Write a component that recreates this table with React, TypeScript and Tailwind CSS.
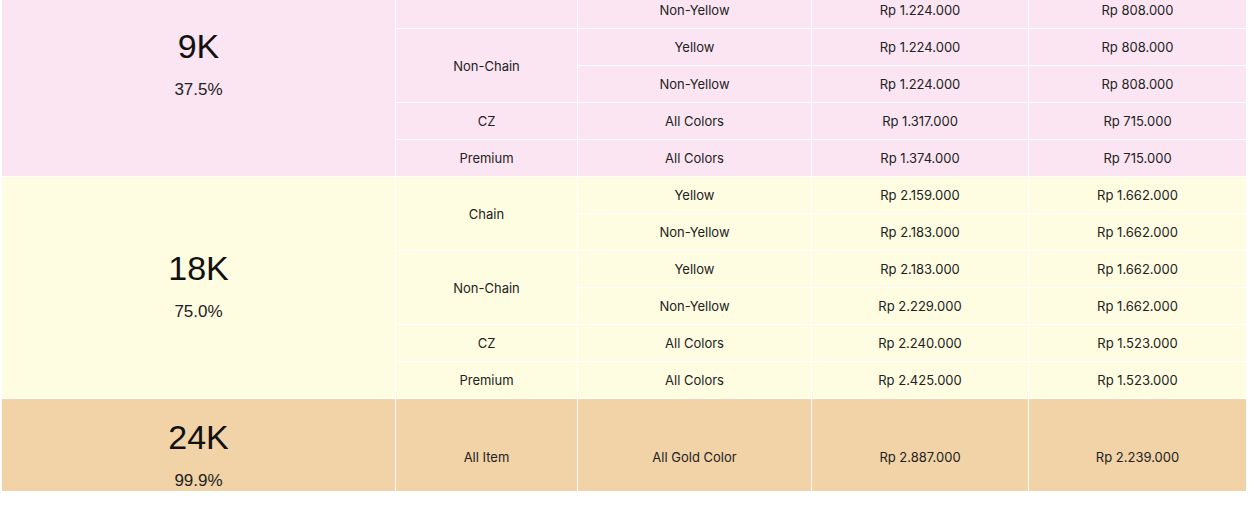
import React from "react";

type Row = { color: string; p1: string; p2: string };
type Group = { type: string; rows: Row[] };
type Karat = { k: string; pct: string; bg: string; groups: Group[] };

const data: Karat[] = [
  {
    k: "9K",
    pct: "37.5%",
    bg: "bg-[#fce5f2]",
    groups: [
      {
        type: "Chain",
        rows: [
          { color: "Yellow", p1: "Rp 1.224.000", p2: "Rp 808.000" },
          { color: "Non-Yellow", p1: "Rp 1.224.000", p2: "Rp 808.000" },
        ],
      },
      {
        type: "Non-Chain",
        rows: [
          { color: "Yellow", p1: "Rp 1.224.000", p2: "Rp 808.000" },
          { color: "Non-Yellow", p1: "Rp 1.224.000", p2: "Rp 808.000" },
        ],
      },
      { type: "CZ", rows: [{ color: "All Colors", p1: "Rp 1.317.000", p2: "Rp 715.000" }] },
      { type: "Premium", rows: [{ color: "All Colors", p1: "Rp 1.374.000", p2: "Rp 715.000" }] },
    ],
  },
  {
    k: "18K",
    pct: "75.0%",
    bg: "bg-[#fefce1]",
    groups: [
      {
        type: "Chain",
        rows: [
          { color: "Yellow", p1: "Rp 2.159.000", p2: "Rp 1.662.000" },
          { color: "Non-Yellow", p1: "Rp 2.183.000", p2: "Rp 1.662.000" },
        ],
      },
      {
        type: "Non-Chain",
        rows: [
          { color: "Yellow", p1: "Rp 2.183.000", p2: "Rp 1.662.000" },
          { color: "Non-Yellow", p1: "Rp 2.229.000", p2: "Rp 1.662.000" },
        ],
      },
      { type: "CZ", rows: [{ color: "All Colors", p1: "Rp 2.240.000", p2: "Rp 1.523.000" }] },
      { type: "Premium", rows: [{ color: "All Colors", p1: "Rp 2.425.000", p2: "Rp 1.523.000" }] },
    ],
  },
];

const rowStart = ["row-start-1", "row-start-2", "row-start-3", "row-start-4", "row-start-5", "row-start-6", "row-start-7", "row-start-8", "row-start-9", "row-start-10", "row-start-11", "row-start-12", "row-start-13"];
const rowSpan: Record<number, string> = { 1: "row-span-1", 2: "row-span-2", 6: "row-span-6" };

const cell = "flex items-center justify-center pt-[2px] text-[13px] text-[#222222]";

function KaratCell({ k, pct }: { k: string; pct: string }) {
  return (
    <div className="flex flex-col items-center pb-[4px]">
      <div className="text-[34px] leading-[40px] text-[#111111]" style={{ fontFamily: "'Liberation Sans', Arial, sans-serif" }}>
        {k}
      </div>
      <div className="mt-[12px] text-[17px] leading-[24px] text-[#222222]" style={{ fontFamily: "'Liberation Sans', Arial, sans-serif" }}>
        {pct}
      </div>
    </div>
  );
}

export default function App() {
  const cells: React.ReactNode[] = [];
  let r = 0;
  data.forEach((kt, ki) => {
    const start = r;
    cells.push(
      <div key={`k${ki}`} className={`${kt.bg} col-start-1 ${rowStart[start]} row-span-6 flex items-center justify-center`}>
        <KaratCell k={kt.k} pct={kt.pct} />
      </div>
    );
    kt.groups.forEach((g, gi) => {
      cells.push(
        <div key={`g${ki}-${gi}`} className={`${kt.bg} ${cell} col-start-2 ${rowStart[r]} ${rowSpan[g.rows.length]}`}>
          {g.type}
        </div>
      );
      g.rows.forEach((row, ri) => {
        cells.push(
          <div key={`c${ki}-${gi}-${ri}`} className={`${kt.bg} ${cell} col-start-3 ${rowStart[r]}`}>
            {row.color}
          </div>
        );
        cells.push(
          <div key={`p${ki}-${gi}-${ri}`} className={`${kt.bg} ${cell} col-start-4 ${rowStart[r]}`}>
            {row.p1}
          </div>
        );
        cells.push(
          <div key={`q${ki}-${gi}-${ri}`} className={`${kt.bg} ${cell} col-start-5 ${rowStart[r]}`}>
            {row.p2}
          </div>
        );
        r++;
      });
    });
  });

  const tan = "bg-[#f1d3a7]";
  cells.push(
    <div key="k24" className={`${tan} col-start-1 row-start-13 flex items-center justify-center`}>
      <KaratCell k="24K" pct="99.9%" />
    </div>,
    <div key="g24" className={`${tan} ${cell} col-start-2 row-start-13`}>All Item</div>,
    <div key="c24" className={`${tan} ${cell} col-start-3 row-start-13`}>All Gold Color</div>,
    <div key="p24" className={`${tan} ${cell} col-start-4 row-start-13`}>Rp 2.887.000</div>,
    <div key="q24" className={`${tan} ${cell} col-start-5 row-start-13`}>Rp 2.239.000</div>
  );

  return (
    <div className="h-[506px] w-[1254px] bg-white" style={{ fontFamily: "Inter, 'Noto Sans', sans-serif" }}>
      <div className="h-[491px] overflow-hidden">
        <div className="ml-[2px] mt-[-45px] grid w-[1244px] grid-cols-[393px_181px_233px_216px_217px] grid-rows-[repeat(12,36px)_116px] gap-px bg-white">
          {cells}
        </div>
      </div>
    </div>
  );
}
